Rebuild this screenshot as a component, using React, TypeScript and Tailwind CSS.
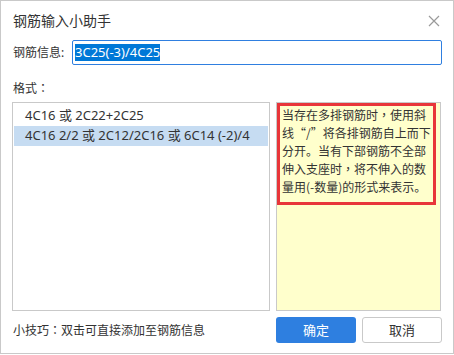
import React from "react";

const tipLines = [
  "当存在多排钢筋时，使用斜",
  "线“/”将各排钢筋自上而下",
  "分开。当有下部钢筋不全部",
  "伸入支座时，将不伸入的数",
  "量用(-数量)的形式来表示。",
];

const formats = ["4C16 或 2C22+2C25", "4C16 2/2 或 2C12/2C16 或 6C14 (-2)/4"];

const cjk = "font-['Noto_Sans_CJK_SC',sans-serif]";

// full-width comma/colon drawn centred, the way the original dialog font shows them
function Punct({ text }: { text: string }) {
  const parts = text.split(/([，：])/);
  return (
    <>
      {parts.map((p, i) =>
        p === "，" || p === "：" ? (
          <span key={i} className="font-['Noto_Sans_CJK_TC',sans-serif]">
            {p}
          </span>
        ) : (
          <React.Fragment key={i}>{p}</React.Fragment>
        )
      )}
    </>
  );
}

export default function App() {
  return (
    <div className="w-[454px] h-[354px] border border-[#c9c9c9] bg-white px-[11px] flex flex-col text-[#333] font-['Noto_Sans','Noto_Sans_CJK_SC',sans-serif]">
      {/* Title */}
      <div className="h-[39px] flex items-center justify-between">
        <span className={`pl-[1px] text-[14px] ${cjk}`}>钢筋输入小助手</span>
        <svg width="12" height="12" viewBox="0 0 12 12" className="mr-[2px]">
          <path d="M1 1 L11 11 M11 1 L1 11" stroke="#9a9a9a" strokeWidth="1.2" fill="none" />
        </svg>
      </div>

      {/* Input row */}
      <div className="flex items-center h-[25px]">
        <span className="w-[60px] pl-[1px] text-[12px]">钢筋信息:</span>
        <div className="flex-1 h-[25px] border border-[#2f7fe0] rounded-[2px] flex items-center pl-[2px]">
          <span className="bg-[#0078d7] text-white text-[13px] leading-[17px]">3C25(-3)/4C25</span>
        </div>
      </div>

      <div className={`mt-[13px] h-[20px] flex items-center pl-[1px] text-[12px] ${cjk}`}>
        <Punct text="格式：" />
      </div>

      {/* Panels */}
      <div className="mt-[4px] h-[209px] flex gap-[6px]">
        <div className="w-[258px] border border-[#c9c9c9] pt-[3px] px-[1px]">
          {formats.map((f, i) => (
            <div
              key={f}
              className={`h-[20px] flex items-center px-[11px] text-[13px] whitespace-nowrap ${
                i === 1 ? "bg-[#c6dcf2]" : ""
              }`}
            >
              {f}
            </div>
          ))}
        </div>
        <div className="w-[165px] border border-[#c9c9c9] bg-[#ffffcc]">
          <div className={`border-[3px] border-[#e8353a] w-[159px] pl-[2px] pb-[6px] ${cjk}`}>
            {tipLines.map((l) => (
              <div key={l} className="h-[18px] leading-[18px] text-[12px] whitespace-nowrap">
                <Punct text={l} />
              </div>
            ))}
          </div>
        </div>
      </div>

      {/* Footer */}
      <div className="mt-[6px] h-[26px] flex items-center gap-[6px]">
        <span className={`pl-[1px] text-[12px] ${cjk}`}>
          <Punct text="小技巧：双击可直接添加至钢筋信息" />
        </span>
        <button className={`ml-auto w-[80px] h-[26px] rounded-[3px] bg-[#2e7fe0] text-white text-[13px] ${cjk}`}>
          确定
        </button>
        <button className={`w-[80px] h-[26px] rounded-[3px] border border-[#c9c9c9] bg-white text-[13px] ${cjk}`}>
          取消
        </button>
      </div>
    </div>
  );
}
